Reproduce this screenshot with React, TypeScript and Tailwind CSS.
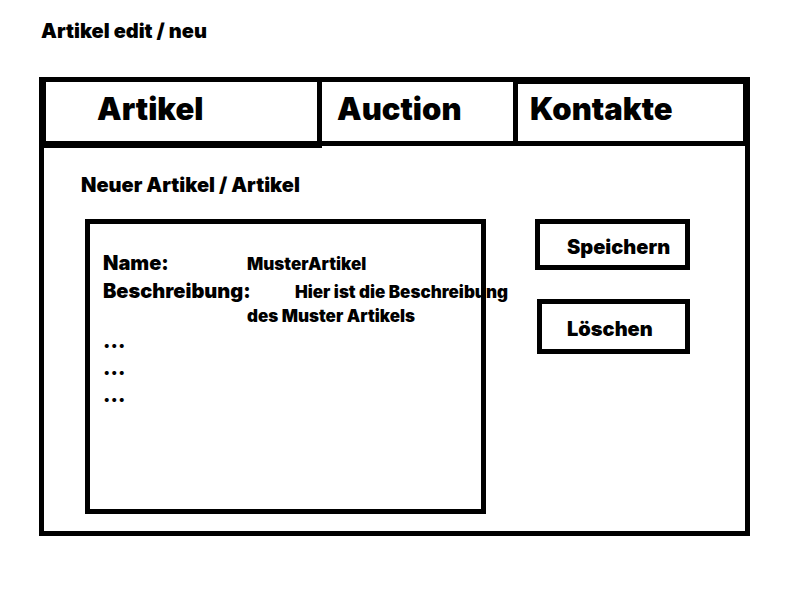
const tabs = [
  { label: "Artikel", className: "-mb-0.5 border-r-5 border-b-7 border-l-2 pb-1.5 pl-[51px] h-[66px]" },
  { label: "Auction", className: "border-b-5 pb-1.5 pl-[15px] h-16" },
  { label: "Kontakte", className: "border-t-2 border-r-2 border-b-5 border-l-5 pb-2 pl-3 h-16" },
];

export default function App() {
  return (
    <main className="bg-white pt-[19px] pr-[50px] pb-16 pl-[39px] font-['Inter','Liberation_Sans',sans-serif] text-[20px] leading-6 font-black text-black">
      <h1 className="pl-0.5">Artikel edit / neu</h1>
      <section className="mt-[34px] border-5 border-black pb-[17px]">
        <nav className="grid h-16 grid-cols-[278fr_191fr_232fr]">
          {tabs.map((tab) => (
            <a
              key={tab.label}
              href="#"
              className={`flex items-center border-black text-[31px] leading-9 ${tab.className}`}
            >
              {tab.label}
            </a>
          ))}
        </nav>
        <div className="px-[37px] pt-[27px]">
          <h2>Neuer Artikel / Artikel</h2>
          <div className="mt-[22px] flex items-start pr-[18px] pl-1">
            <dl className="min-h-[295px] w-[401px] shrink-0 border-5 border-black px-[13px] pt-[26px] leading-[27px]">
              <div className="flex items-baseline">
                <dt className="w-36 shrink-0">Name:</dt>
                <dd className="text-[17px]">MusterArtikel</dd>
              </div>
              <div className="flex items-baseline">
                <dt className="w-36 shrink-0">Beschreibung:</dt>
                <dd className="indent-12 text-[17px] leading-6 whitespace-nowrap">
                  Hier ist die Beschreibung
                  <br />
                  <span>des Muster Artikels</span>
                </dd>
              </div>
              <dt>...</dt>
              <dt>...</dt>
              <dt>...</dt>
            </dl>
            <div className="ml-[49px] flex flex-1 flex-col items-end gap-[29px]">
              <button type="button" className="h-[51px] w-[155px] border-5 border-black pt-1 pl-[27px] text-left">
                Speichern
              </button>
              <button type="button" className="h-[55px] w-[153px] border-5 border-black pt-1 pl-[25px] text-left">
                Löschen
              </button>
            </div>
          </div>
        </div>
      </section>
    </main>
  );
}
